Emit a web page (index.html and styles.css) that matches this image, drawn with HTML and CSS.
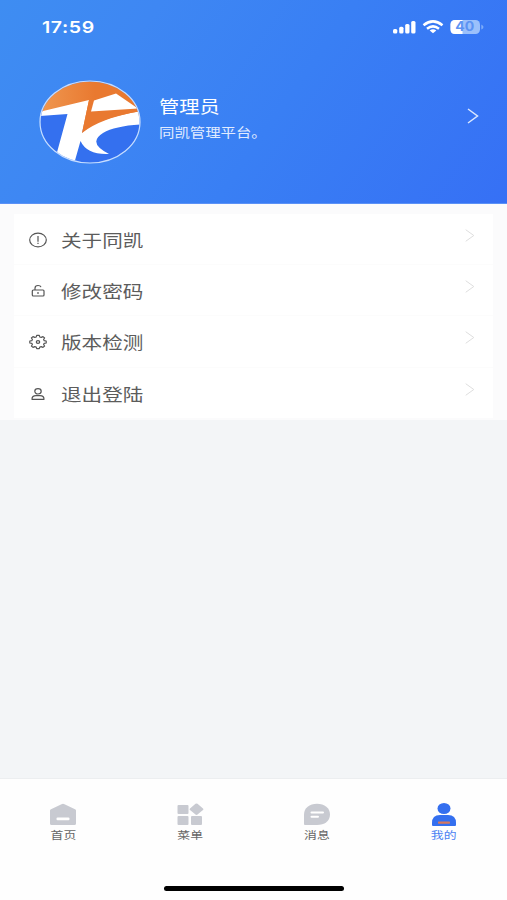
FILE: index.html
```html
<!DOCTYPE html>
<html lang="zh-CN">
<head>
<meta charset="utf-8">
<title>我的</title>
<link rel="stylesheet" href="styles.css">
</head>
<body>
<header class="hero">
  <div class="status">
    <span class="time wide">17:59</span>
    <svg class="indicators" width="92" height="18" viewBox="0 0 92 18">
      <g fill="#fff">
        <rect x="1" y="11" width="4.300" height="4.500" rx="1.500"/><rect x="7.200" y="8.800" width="4.300" height="6.700" rx="1.500"/><rect x="13.200" y="6" width="4.300" height="9.500" rx="1.500"/><rect x="19.200" y="3" width="4.300" height="12.500" rx="1.500"/>
      </g>
      <g fill="none" stroke="#fff" stroke-width="2.500">
        <path d="M31.500 7.200Q41 -.5 50.500 7.200"/><path d="M35 10.700Q41 6 47 10.700"/>
      </g>
      <path d="M37.700 12.500Q41 10 44.300 12.500L41 15.200Z" fill="#fff"/>
      <rect x="58.500" y="2" width="29.500" height="14" rx="4.500" fill="#9bc0fb"/>
      <path d="M70.500 2H63Q58.500 2 58.500 6.500V11.500Q58.500 16 63 16H70.500Z" fill="#fff"/>
      <path d="M89.300 6.500Q91.500 7.500 91.500 9T89.300 11.500Z" fill="#7dacf8"/>
      <text class="charge" x="63.300" y="13.200" textLength="19" lengthAdjust="spacingAndGlyphs">40</text>
    </svg>
  </div>
  <div class="profile">
    <svg class="avatar" width="102" height="84" viewBox="0 0 102 84">
      <defs>
        <clipPath id="disc"><ellipse cx="51" cy="42" rx="49.500" ry="40.500"/></clipPath>
        <linearGradient id="orange" x1="0" y1="0" x2="1" y2="0"><stop stop-color="#ef9851"/><stop offset=".55" stop-color="#e97930"/></linearGradient>
      </defs>
      <g clip-path="url(#disc)">
        <rect width="102" height="84" fill="#3470ef"/>
        <path d="M0 0H102V36L43 54L48 22L0 34Z" fill="url(#orange)"/>
        <path d="M0 32L50 20L43 53Q55 39 102 31V44.500Q76 46 64 53Q48 63 70 74Q48 75 41.500 61L35 84L17 76L28.500 34L0 36Z" fill="#fff"/>
        <path d="M50 20H102V31Q61 38 43 53Z" fill="#e97930"/>
        <path d="M55 20.500L77 13.500L99 28.500L52 31.500Z" fill="#fff"/>
      </g>
      <ellipse cx="51" cy="42" rx="50" ry="41" fill="none" stroke="#c7ddff" stroke-width="1.200"/>
    </svg>
    <div class="identity">
      <div class="name wide">管理员</div>
      <div class="desc wide">同凯管理平台。</div>
    </div>
    <svg class="go" width="12" height="16" viewBox="0 0 12 16"><path d="M1 1L10.500 8L1 15" fill="none" stroke="#dbe8ff" stroke-width="1.500"/></svg>
  </div>
</header>
<main class="panel">
  <nav class="menu">
    <a class="row">
      <svg class="icon" width="20" height="18" viewBox="0 0 20 18"><ellipse cx="10" cy="9" rx="8.300" ry="6.900"/><path d="M10 5V10.800M10 11.800V13"/></svg>
      <span class="label wide">关于同凯</span>
      <svg class="arrow" width="10" height="13" viewBox="0 0 10 13"><path d="M.7 .7L8.800 6.500L.7 12.300"/></svg>
    </a>
    <a class="row">
      <svg class="icon" width="20" height="18" viewBox="0 0 20 18"><rect x="4.300" y="8" width="11.700" height="6" rx="1"/><path d="M7 8V6.200Q7 3.500 10 3.500Q12.500 3.500 13 5.200M10 10V12"/></svg>
      <span class="label wide">修改密码</span>
      <svg class="arrow" width="10" height="13" viewBox="0 0 10 13"><path d="M.7 .7L8.800 6.500L.7 12.300"/></svg>
    </a>
    <a class="row">
      <svg class="icon" width="20" height="18" viewBox="0 0 20 18"><path d="M8.200 4L8.700 2.300H11.300L11.800 4L13.200 4.400L15 3.600L16.600 5L15.600 6.500L16.200 7.700L18.200 8V10L16.200 10.300L15.600 11.500L16.600 13L15 14.400L13.200 13.600L11.800 14L11.300 15.700H8.700L8.200 14L6.800 13.600L5 14.400L3.400 13L4.400 11.500L3.800 10.300L1.800 10V8L3.800 7.700L4.400 6.500L3.400 5L5 3.600L6.800 4.400Z" stroke-linejoin="round"/><ellipse cx="10" cy="9" rx="1.700" ry="1.300"/></svg>
      <span class="label wide">版本检测</span>
      <svg class="arrow" width="10" height="13" viewBox="0 0 10 13"><path d="M.7 .7L8.800 6.500L.7 12.300"/></svg>
    </a>
    <a class="row">
      <svg class="icon" width="20" height="18" viewBox="0 0 20 18"><ellipse cx="10" cy="6.300" rx="3.200" ry="2.700"/><path d="M4 14.300Q4 10.700 8 10.700H12Q16 10.700 16 14.300Z" stroke-linejoin="round"/></svg>
      <span class="label wide">退出登陆</span>
      <svg class="arrow" width="10" height="13" viewBox="0 0 10 13"><path d="M.7 .7L8.800 6.500L.7 12.300"/></svg>
    </a>
  </nav>
</main>
<footer class="tabbar">
  <nav class="tabs">
    <a class="tab">
      <svg width="28" height="24" viewBox="0 0 28 24"><path d="M1 7.500Q1 6.700 2 6.300L12.500 1.200Q14 .5 15.500 1.200L26 6.300Q27 6.700 27 7.500V20.500Q27 22 25.500 22H2.500Q1 22 1 20.500Z" fill="#c8cad1"/><rect x="7.500" y="14.500" width="13" height="2.700" rx="1" fill="#fff"/></svg>
      <span class="caption wide">首页</span>
    </a>
    <a class="tab">
      <svg width="28" height="24" viewBox="0 0 28 24" fill="#c8cad1"><rect x="1.500" y="2" width="11" height="9" rx="1"/><rect x="1.500" y="13" width="11" height="9" rx="1"/><rect x="15" y="13" width="11" height="9" rx="1"/><path d="M19.500 .8Q20.500 0 21.500 .8L27 5.400Q28 6.200 27 7L21.500 11.600Q20.500 12.400 19.500 11.600L14 7Q13 6.200 14 5.400Z"/></svg>
      <span class="caption wide">菜单</span>
    </a>
    <a class="tab">
      <svg width="28" height="24" viewBox="0 0 28 24"><path d="M1 11.500C1 5 6.500 .8 14 .8S27 5 27 11.500S21.500 22 14 22H2Q1 22 1 21Z" fill="#c8cad1"/><path d="M8.500 9.500H20M8.500 13.700H15" stroke="#fff" stroke-width="2" stroke-linecap="round"/></svg>
      <span class="caption wide">消息</span>
    </a>
    <a class="tab active">
      <svg width="28" height="24" viewBox="0 0 28 24"><ellipse cx="14" cy="5.500" rx="6.500" ry="5.500" fill="#346fef"/><path d="M2 20Q2 12 10 12H18Q26 12 26 20V22Q26 23 25 23H3Q2 23 2 22Z" fill="#346fef"/><rect x="8" y="18.500" width="12" height="2.200" rx=".7" fill="#d7785c"/></svg>
      <span class="caption wide">我的</span>
    </a>
  </nav>
  <div class="home"></div>
</footer>
</body>
</html>
```
FILE: styles.css
```css
* { box-sizing: border-box; }

body {
  margin: 0;
  height: 900px;
  display: flex;
  flex-direction: column;
  background: #f3f5f7;
  font-family: "Noto Sans CJK SC", sans-serif;
  overflow: hidden;
}

/* Glyphs are drawn wider than they are tall across the whole screen. */
.wide { transform: scaleY(.84); white-space: nowrap; }

.hero {
  height: 204px;
  flex: none;
  background: linear-gradient(125deg, #3e8df2 0%, #3e87f3 25%, #397ff4 55%, #3670f5 100%);
  border-bottom: 1px solid #5b91f6;
  color: #fff;
}

.status {
  height: 54px;
  padding: 0 23px 0 42px;
  display: flex;
  align-items: center;
  justify-content: space-between;
}

.time {
  font: 600 19.500px/24px Inter, sans-serif;
  letter-spacing: .6px;
}

.charge {
  font: 700 12.500px Inter, sans-serif;
  fill: #5c93f3;
}

.profile {
  height: 84px;
  margin-top: 26px;
  padding: 0 28px 0 39px;
  display: flex;
  align-items: center;
}

.identity { margin: 0 0 9px 18px; flex: 1; }
.name { font-size: 20.300px; line-height: 28px; }
.desc { font-size: 15.400px; line-height: 25px; color: #e0ebff; }
.go { margin-bottom: 12px; }

.panel {
  height: 216px;
  flex: none;
  padding: 10px 14px 2px;
  background: #fbfbfc;
}

.menu { height: 204px; background: #fff; }

.row {
  height: 51.200px;
  padding: 0 18px 0 14px;
  display: flex;
  align-items: center;
  border-bottom: 1px solid #fcfcfc;
}

.row:last-child { border-bottom: 0; }

.icon { margin-top: 1px; fill: none; stroke: #555; stroke-width: 1.200; }
.label { margin: 0 0 1px 13px; flex: 1; font-size: 20.600px; line-height: 30px; color: #5c5c5c; }
.arrow { margin-bottom: 7px; fill: none; stroke: #dedede; stroke-width: 1; }

.tabbar {
  height: 122px;
  margin-top: auto;
  border-top: 1px solid #eceef0;
  background: #fefefe;
  display: flex;
  flex-direction: column;
  align-items: center;
}

.tabs {
  width: 100%;
  height: 107px;
  padding-top: 24px;
  display: grid;
  grid-template-columns: repeat(4, 1fr);
}

.tab {
  display: flex;
  flex-direction: column;
  align-items: center;
  color: #666;
}

.caption { font-size: 12.800px; line-height: 16px; }
.active { color: #4c82f3; }

.home {
  width: 180px;
  height: 5px;
  border-radius: 3px;
  background: #000;
}
```
